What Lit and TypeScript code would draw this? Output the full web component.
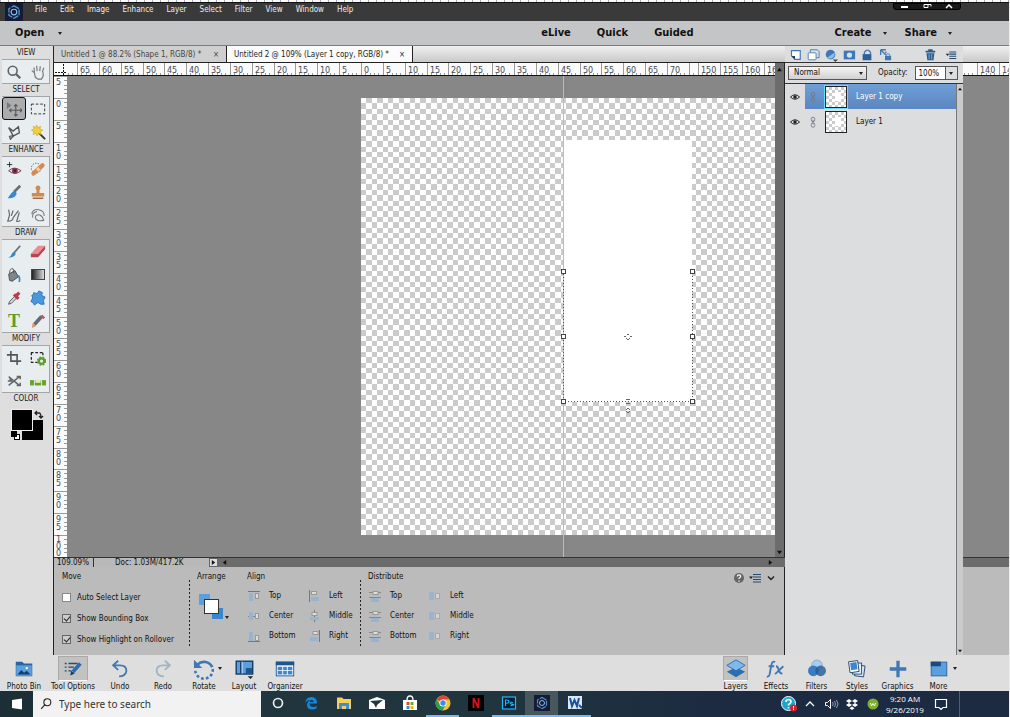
import { LitElement, html, css, svg, TemplateResult } from 'lit';
import { customElement, property } from 'lit/decorators.js';
import { classMap } from 'lit/directives/class-map.js';

const BLUE = '#3f78b5';
const LIGHT = '#8fbbe4';
const GREY = '#606468';

const ICONS: Record<string, TemplateResult> = {
  // tool box
  zoom: svg`<circle cx="7.500" cy="7.500" r="5" fill="none" stroke="${GREY}" stroke-width="1.800"/><path d="M11 11l5 5" stroke="${GREY}" stroke-width="2.600"/>`,
  hand: svg`<path d="M5 10L2 7.500M5 10L4.500 4M8 8L7.500 2M11 8L11.500 2.500M14 9l1.500-5M5 10l1 5 3 2h4l2-4-.5-4" fill="none" stroke="#777" stroke-width="1.300"/>`,
  move: svg`<path d="M1 1v8l5-4z" fill="#777"/><path d="M11 4v13M5 10.500h12M9 6l2-2 2 2M9 15l2 2 2-2M6 8.500l-2 2 2 2M16 8.500l2 2-2 2" fill="none" stroke="#555" stroke-width="1.200"/>`,
  marquee: svg`<rect x="1.500" y="3.500" width="15" height="11" fill="none" stroke="#222" stroke-dasharray="3 2"/>`,
  lasso: svg`<path d="M3 4l5 4 6-5 1 7-6 3-4 4-1-3 4-1z" fill="none" stroke="#555" stroke-width="1.500"/>`,
  wand: svg`<path d="M9 9l8 8" stroke="#333" stroke-width="2"/><path d="M7.500 1l1.500 3 3-1.500-1 3 3.500 1.500-3 1.500 1 3.500-3-1.500-1.500 3-1.500-3-3 1.500 1-3.500-3-1.500 3-1.500-1-3 3 1.500z" fill="#f0cf3c" stroke="#c9a11e" stroke-width=".6"/>`,
  redeye: svg`<path d="M4 1v6M1 4h6" stroke="#222"/><path d="M3 11q6-6 14 0-7 6-14 0z" fill="#e3dada" stroke="#5c3c44"/><circle cx="10" cy="11" r="3.200" fill="#8c2e48"/><circle cx="10" cy="11" r="1.200" fill="#222"/>`,
  heal: svg`<circle cx="7" cy="8" r="5.500" fill="none" stroke="#555" stroke-dasharray="1.500 1.500"/><path d="M4 14L14 5" stroke="#d8894f" stroke-width="5" stroke-linecap="round"/><path d="M8 10.500l2.500-2.200" stroke="#f5cda6" stroke-width="4"/>`,
  smart: svg`<path d="M16 2L9 9" stroke="#6c7074" stroke-width="3"/><path d="M10 8q-2 0-4 2.500T2 16q6 0 8-2t2-4z" fill="#3b86cc"/>`,
  stamp: svg`<path d="M6.500 3q2.500-2.500 5 0 1 2-.8 4v3H16v4H2v-4h5.300V7q-1.800-2-.8-4z" fill="#cd8a52"/><path d="M3 16h12" stroke="#9a5b2c" stroke-width="1.500"/>`,
  blur: svg`<path d="M3 3l1 6-2 7q6 0 6-4l6-8M8 4l-2 6M15 6l-3 10q2 1 4-1" fill="none" stroke="#666" stroke-width="1.300"/>`,
  sponge: svg`<path d="M2 8q1-6 8-5 6 1 6 7M16 15q-9 2-10-3 0-4 5-3 4 2 4 6M3 12q-1-6 5-7" fill="none" stroke="#777" stroke-width="1.200"/>`,
  brush: svg`<path d="M16 2l-7 8" stroke="#6c7074" stroke-width="2"/><path d="M9 9l2 2q-2 5-9 4 4-1 4-3 1-3 3-3z" fill="#3b86cc"/>`,
  eraser: svg`<path d="M1 11l8-9h8l-8 9z" fill="#e88d94"/><path d="M1 11h8v4H1zM9 11l8-9v4l-8 9z" fill="#b4464f"/>`,
  bucket: svg`<path d="M3 8l7-4 4 7-7 5-3-1z" fill="#7f8589" stroke="#44484c"/><path d="M4 7Q4 1 8 2l1 5" fill="none" stroke="#555"/><path d="M14 9q3 1 2 8h-2q1-5-1-7z" fill="#3b86cc"/>`,
  picker: svg`<path d="M3 16l1-3 6-6 2 2-6 6z" fill="#ddd" stroke="#444"/><path d="M9 5l5 5M11 7l4-4" stroke="#b93b4b" stroke-width="3.500"/>`,
  shape: svg`<path d="M4 3l4 1 2-3 4 2-1 3 4 2-2 4 1 4-4 0-3-2-4 3-2-3-2-1 2-4-1-3 2-1z" fill="#4a97dd" stroke="#2e72b5"/>`,
  pencil: svg`<path d="M5 13l8-9" stroke="#666a6e" stroke-width="4"/><path d="M3 11l4 4-5 2z" fill="#d89a68"/><path d="M12 3l2-1 3 3-2 2z" fill="#c3505a"/>`,
  crop: svg`<path d="M5.500 1v11.500H17M1 5.500h11.500V17" fill="none" stroke="#555" stroke-width="1.800"/>`,
  recompose: svg`<path d="M1 3h14M1 14h8M1.500 3v11M14.500 3v4" fill="none" stroke="#222" stroke-width="1.400" stroke-dasharray="3 2"/><circle cx="13" cy="12.500" r="3" fill="none" stroke="#5f9c2d" stroke-width="2.500"/><circle cx="13" cy="12.500" r="4.600" fill="none" stroke="#5f9c2d" stroke-width="1.500" stroke-dasharray="2 1.700"/>`,
  content: svg`<path d="M3 4l12 10M3 14L15 4M2 9h4l-2-3M12 14h4v-3M12 4h4v3" fill="none" stroke="#666" stroke-width="1.700"/>`,
  straighten: svg`<rect x="0" y="8" width="18" height="6" fill="#6aa22d"/><rect x="6" y="7" width="6" height="4" fill="#dff0b6"/><path d="M5 7v8M13 7v8" stroke="#e9eff1"/>`,
  // layer panel
  newlayer: svg`<path d="M4 3h10v10H8L4 9z" fill="#fff" stroke="${BLUE}" stroke-width="1.300"/><path d="M4 9h4v4z" fill="#173c66"/>`,
  newgroup: svg`<path d="M5 5V2h8l2 2v7h-3" fill="none" stroke="${BLUE}"/><rect x="2.500" y="5.500" width="9" height="8" rx="1" fill="#fff" stroke="${BLUE}"/>`,
  adjust: svg`<circle cx="7.500" cy="7.500" r="5.500" fill="${BLUE}"/><path d="M3.500 11A5.500 5.500 0 0 0 12 5z" fill="${LIGHT}"/><path d="M10 13h6l-3 3z" fill="#444"/>`,
  mask: svg`<rect x="2" y="3" width="13" height="10" fill="${BLUE}"/><circle cx="8.500" cy="8" r="3" fill="#cfe3f6"/>`,
  lock: svg`<path d="M5 7V5q3.500-5 7 0v2" fill="none" stroke="${BLUE}" stroke-width="1.500"/><rect x="3" y="7" width="10" height="7" fill="#2d6097"/>`,
  locktrans: svg`<path d="M3 2h6M3 2v6M3 2l6 6M9 4v2" fill="none" stroke="${BLUE}" stroke-width="1.500"/><rect x="8" y="9" width="7" height="5" fill="${BLUE}"/><path d="M9.500 9V7.500q2-2 4 0V9" fill="none" stroke="${BLUE}"/>`,
  trash: svg`<path d="M3 3h11v2H3zM4 6h9l-1 8H5zM6 1.500h5V3H6z" fill="#28598e"/><path d="M7 7v6M10 7v6" stroke="${LIGHT}"/>`,
  panelmenu: svg`<path d="M6 4.500h8M6 7h8M6 9.500h8M6 12h8" stroke="#274a70" stroke-width="1.200"/><path d="M2 6.500h4l-2 2.500z" fill="#222"/>`,
  eye: svg`<path d="M2 8q6-6 12 0-6 6-12 0z" fill="none" stroke="#222" stroke-width="1.300"/><circle cx="8" cy="8" r="2.300" fill="#222"/>`,
  link: svg`<rect x="6" y="2.500" width="4" height="5" rx="2" fill="none" stroke="#778"/><rect x="6" y="9" width="4" height="5" rx="2" fill="none" stroke="#778"/><path d="M8 5.500v5" stroke="#778"/>`,
  help: svg`<circle cx="8" cy="8" r="5" fill="#666"/><path d="M6.300 6.500q0-1.700 1.700-1.700t1.700 1.500q0 1-1.700 2v.7M8 10.500v1.200" fill="none" stroke="#fff" stroke-width="1.200"/>`,
  chevron: svg`<path d="M5 6.500L8 9.500 11 6.500" fill="none" stroke="#222" stroke-width="1.500"/>`,
  // action bar, 24 x 24
  bin: svg`<path d="M3 4h7l2 2h9v14H3z" fill="#2b649f"/><rect x="3.500" y="8" width="17" height="11.500" fill="#5b9fdd"/><path d="M5 18l4-5 3 3 3-2 4 4z" fill="#123f70"/><circle cx="15" cy="11" r="1.300" fill="#fff"/>`,
  options: svg`<path d="M3 6h2M3 10h2M3 14h2M7 6h10M7 10h6M7 14h3" stroke="#274a70" stroke-width="1.500"/><path d="M20 6l-8 9" stroke="#2b6cb0" stroke-width="4"/><path d="M9 19l1-5 4 3z" fill="#173c66"/>`,
  undo: svg`<path d="M10 3L4.500 8l5.500 5M5 8h7q7 0 7 6-1 6-8 6" fill="none" stroke="${BLUE}" stroke-width="2"/>`,
  redo: svg`<path d="M14 3l5.500 5-5.500 5M19 8h-7q-7 0-7 6 1 6 8 6" fill="none" stroke="#9db4c9" stroke-width="2"/>`,
  rotate: svg`<path d="M5 7a10 10 0 0 1 16 3" fill="none" stroke="${BLUE}" stroke-width="3"/><path d="M1 2v9h9z" fill="${BLUE}"/><path d="M21.500 12A9.500 9.500 0 1 1 2.500 14" fill="none" stroke="${BLUE}" stroke-width="2.800" stroke-dasharray="3 2.400"/>`,
  layout: svg`<rect x="3.500" y="3.500" width="18" height="14" fill="#5b9fdd" stroke="#143a63" stroke-width="1.500"/><path d="M8.500 4v13" stroke="#143a63" stroke-width="1.500"/><path d="M14 11h7v6h-7z" fill="#1d5590"/><path d="M10 4v13" stroke="#cfe3f6"/><path d="M16 20h6l-3 3z" fill="#222"/>`,
  organizer: svg`<rect x="2.500" y="4.500" width="19" height="15" fill="#fff" stroke="#1d5590"/><rect x="2" y="4" width="20" height="4" fill="#1d5590"/><path d="M4 9.500h5V13H4zM10 9.500h4V13h-4zM15 9.500h5V13h-5zM4 14h5v4H4zM10 14h4v4h-4zM15 14h5v4h-5z" fill="#3b86cc"/>`,
  layers: svg`<path d="M12 10l10 5-10 6-10-6z" fill="#2d6fae"/><path d="M12 2l10 6-10 6L2 8z" fill="#7db9ee" stroke="#2d6fae"/>`,
  effects: svg`<path d="M11 4.500q-3-2-4 3L5 18q-1 3-3 2M4 9h6M12 9q2 0 3 4t4 4M20 9l-9 8.500" fill="none" stroke="${BLUE}" stroke-width="2"/>`,
  filters: svg`<circle cx="12" cy="8" r="5.800" fill="#a6cdef" stroke="#6fa3d2" stroke-width=".8"/><circle cx="8" cy="14" r="5.800" fill="#3b7cc0"/><circle cx="16" cy="14" r="5.800" fill="#245a93" opacity=".8"/>`,
  styles: svg`<rect x="10" y="8" width="10" height="12" fill="#d7e8f7" stroke="#274a70" transform="rotate(8 15 14)"/><rect x="7" y="5.500" width="10" height="12" fill="#e9f3fb" stroke="#274a70"/><rect x="3.500" y="3.500" width="10" height="12" fill="#fff" stroke="#274a70" transform="rotate(-8 8 9)"/><rect x="5" y="5" width="7" height="8" fill="#3b86cc" transform="rotate(-8 8 9)"/>`,
  graphics: svg`<path d="M12 3v18M3 12h18" stroke="${BLUE}" stroke-width="3.600"/>`,
  more: svg`<rect x="3.500" y="4.500" width="17" height="15" fill="#5b9fdd" stroke="#2b649f"/><path d="M3 4h11v5H3z" fill="#1d4a7d"/>`,
  arrange: svg`<rect x="0" y="0" width="11" height="11" fill="#5b9fdd"/><rect x="13" y="14" width="11" height="11" fill="#3b86cc"/><rect x="5.500" y="5.500" width="14" height="14" fill="#fff" stroke="#333"/>`,
  // task bar, 16 x 16
  windows: svg`<path d="M3 4l10-1.500v11L3 12z" fill="#fff"/>`,
  search: svg`<circle cx="9.500" cy="6" r="4" fill="none" stroke="#222" stroke-width="1.200"/><path d="M6.500 9L2.500 13.500" stroke="#222" stroke-width="1.300"/>`,
  cortana: svg`<circle cx="8" cy="8" r="4.500" fill="none" stroke="#eee" stroke-width="1.700"/>`,
  edge: svg`<path d="M2 8Q3 2 8.500 2 14 2 14 8.500H6.500q0 3.500 4 3.500 2 0 3-1v2.500q-2 1-4.500 1Q4 14.500 4 9.500 4.500 6 8 5 3.500 5 2 8z" fill="#1488de"/><path d="M6.700 7h4q0-2-2-2-1.700 0-2 2z" fill="#20353d"/>`,
  explorer: svg`<path d="M1 2.500h5l1.500 1.500H15V14H1z" fill="#f6cf5c"/><path d="M3 8h10v6h-3v-3H6v3H3z" fill="#3b8fd6"/>`,
  mail: svg`<path d="M0 5l8-3 8 3v9H0z" fill="#fff"/><path d="M1 6l13-1-6 5-1 3-2-4z" fill="#20353d"/>`,
  store: svg`<path d="M1 5h14v10H1z" fill="#fff"/><path d="M5 5q0-4 3-4t3 4" fill="none" stroke="#fff" stroke-width="1.300"/><path d="M4.500 7h3v3h-3z" fill="#e24a25"/><path d="M8.500 7h3v3h-3z" fill="#6fae24"/><path d="M4.500 11h3v3h-3z" fill="#2a93dd"/><path d="M8.500 11h3v3h-3z" fill="#f2b417"/>`,
  chrome: svg`<circle cx="8" cy="8" r="7.500" fill="#f4c430"/><path d="M8 8L1.500 4.300A7.500 7.500 0 0 1 14.500 4.500H8z" fill="#db4437"/><path d="M1.500 4.300A7.500 7.500 0 0 0 7.500 15.500L11 9.500 5 9z" fill="#2d9c58"/><circle cx="8" cy="8" r="3.600" fill="#fff"/><circle cx="8" cy="8" r="2.700" fill="#4285f4"/>`,
  netflix: svg`<rect width="16" height="16" fill="#000"/><path d="M5.500 3v10M10.500 3v10M5.500 3l5 10" stroke="#d8111c" stroke-width="1.800" fill="none"/>`,
  photoshop: svg`<rect x="1.500" y="2" width="13" height="12" fill="#001d33" stroke="#24b5f5" stroke-width="1.200"/><path d="M4.500 11V5h1.500q2 0 2 1.600T6 8.200H4.500M12 7.500q-2.500-.8-2.500.5t2.500 1.400-2.500 1.300" fill="none" stroke="#24b5f5" stroke-width="1.100"/>`,
  elements: svg`<rect width="16" height="16" fill="#161a35"/><path d="M8 2.500l4.500 2.500v6L8 13.500 3.500 11V5z" fill="none" stroke="#4d94cf" stroke-width="1.200" stroke-dasharray="5 1"/><circle cx="8" cy="8" r="2.500" fill="none" stroke="#8ac0ee"/>`,
  word: svg`<path d="M1 1h14v13H1z" fill="#dbe8f8"/><path d="M3 3l2 8 2.500-6L10 11l2-8" fill="none" stroke="#1d4fa0" stroke-width="2"/><path d="M12 10l3 3" stroke="#1d4fa0" stroke-width="2"/>`,
  support: svg`<circle cx="7.500" cy="7.500" r="7" fill="#1ca5cf" stroke="#fff"/><path d="M5 6q0-2.500 2.500-2.500T10 6q0 1-2.500 2.500v1M7.500 11v1.500" fill="none" stroke="#fff" stroke-width="1.600"/><circle cx="12.500" cy="12" r="3.500" fill="#d8202c"/><path d="M12.500 10v2.500M12.500 13v1" stroke="#fff"/>`,
  up: svg`<path d="M4 10l4-4 4 4" fill="none" stroke="#fff" stroke-width="1.300"/>`,
  speaker: svg`<path d="M2.500 6.500h2l3-3v9l-3-3h-2z" fill="none" stroke="#fff"/><path d="M9.500 6q1.500 2 0 4M11.500 5q2 3 0 6M13.500 4q3 4 0 8" fill="none" stroke="#99a" />`,
  dropbox: svg`<path d="M5 3L2 5l3 2 3-2zM11 3L8 5l3 2 3-2zM5 7L2 9l3 2 3-2zM11 7L8 9l3 2 3-2zM8 10.500l-2.500 1.800L8 14l2.500-1.700z" fill="#fff"/>`,
  green: svg`<circle cx="8" cy="8" r="5.500" fill="#7fae30"/><path d="M5.500 7l1 3L8 7.500 9.500 10l1-3" fill="none" stroke="#eef7d8"/>`,
  notice: svg`<path d="M2.500 3.500h11v8H10L8 13.500 6 11.500H2.500z" fill="none" stroke="#fff" stroke-width="1.200"/>`,
  // align and distribute
  atop: svg`<path d="M0 1.500h12" stroke="#777"/><rect x="1" y="3" width="4" height="8" fill="#98b4cf"/><rect x="7.500" y="3.500" width="3" height="5" fill="#ddd" stroke="#999"/>`,
  acenter: svg`<rect x="1" y="2" width="4" height="8" fill="#98b4cf"/><rect x="7.500" y="3.500" width="3" height="5" fill="#ddd" stroke="#999"/><path d="M0 6.500h1M5 6.500h2" stroke="#888"/>`,
  abottom: svg`<path d="M0 11.500h12" stroke="#777"/><rect x="1" y="2" width="4" height="9" fill="#98b4cf"/><rect x="7.500" y="5.500" width="3" height="5" fill="#ddd" stroke="#999"/>`,
  aleft: svg`<path d="M1.500 0v12" stroke="#777"/><rect x="3.500" y="1.500" width="5" height="3" fill="#ddd" stroke="#999"/><rect x="3" y="7" width="8" height="4" fill="#98b4cf"/>`,
  amiddle: svg`<path d="M6.500 0v12" stroke="#777"/><rect x="4" y="2.500" width="5" height="3" fill="#ddd" stroke="#999"/><rect x="2" y="7" width="9" height="3" fill="#98b4cf"/>`,
  aright: svg`<path d="M11.500 0v12" stroke="#777"/><rect x="5" y="1.500" width="5" height="3" fill="#ddd" stroke="#999"/><rect x="2" y="7" width="8" height="4" fill="#98b4cf"/>`,
  dvert: svg`<path d="M0 2.500h12M0 7.500h12" stroke="#888"/><rect x="4" y="1.500" width="5" height="3" fill="#ddd" stroke="#999"/><rect x="2" y="8" width="8" height="4" fill="#98b4cf"/>`,
  dhoriz: svg`<rect x="0" y="2" width="5" height="8" fill="#98b4cf"/><rect x="6.500" y="3.500" width="4" height="5" fill="#d3d3d3" stroke="#aaa"/>`,
};

const icon = (name: string, box = 18, cls = 'i18') =>
  html`<svg class=${cls} viewBox="0 0 ${box} ${box}" aria-hidden="true">${ICONS[name]}</svg>`;

const PITCH = 21.85;

@customElement('ruler-strip')
class RulerStrip extends LitElement {
  @property({ type: Boolean }) vertical = false;
  @property({ attribute: false }) marks: { at: number; label: string }[] = [];

  static styles = css`
    :host { display: block; overflow: hidden; background: #fafafa; }
    svg { display: block; width: 100%; height: 100%; }
    text { font: 8px "DejaVu Sans", Verdana, sans-serif; fill: #444a55; }
    .tick { stroke: #9a9a9a; }
  `;

  private stack(at: number, label: string) {
    const long = label.length > 2;
    const first = at + (long ? 7 : 9);
    const step = long ? 7 : 8;
    return [...label].map((c, i) => svg`<text x="2" y=${first + i * step}>${c}</text>`);
  }

  render() {
    const minor = [1, 2, 3, 4].map((n) => Math.round((n * PITCH) / 5));
    return html`<svg>
      ${this.marks.map(({ at, label }) => this.vertical
        ? svg`<path class="tick" d="M0 ${at + 0.5}h13 ${minor.map((m) => `M10 ${at + m + 0.5}h3`).join('')}"/>${this.stack(at, label)}`
        : svg`<path class="tick" d="M${at + 0.5} 0v12 ${minor.map((m) => `M${at + m + 0.5} 10v3`).join('')}"/>
            <text x=${at + 3} y="10">${label}</text>`)}
    </svg>`;
  }
}

const TOP_MARKS = [
  ...Array.from({ length: 30 }, (_, i) => ({
    at: Math.round(294 + (i - 14) * PITCH),
    label: i < 1 || i > 28 ? '' : String(Math.abs(i - 14) * 5),
  })),
  ...['150', '155', '160', '165'].map((label, i) => ({ at: Math.round(631 + i * PITCH), label })),
];
const SIDE_MARKS = Array.from({ length: 22 }, (_, i) => ({
  at: Math.round(22 + (i - 1) * PITCH),
  label: String(Math.abs(i - 1) * 5),
}));
const TAIL_MARKS = [{ at: -8, label: '' }, { at: 14, label: '140' }, { at: 36, label: '145' }];

// Grey squares of the transparency grid, snapped to whole pixels.
const CELL = 5.4;
const CHECKS = (() => {
  const edge = (n: number) => Math.round(n * CELL);
  let d = '';
  for (let r = 0; r < 81; r++) {
    for (let c = (r + 1) % 2; c < 160; c += 2) {
      d += `M${294 + edge(c)} ${22 + edge(r)}H${294 + edge(c + 1)}V${22 + edge(r + 1)}H${294 + edge(c)}z`;
    }
  }
  return d;
})();

const TOOLS: [string, [string, string][]][] = [
  ['VIEW', [['zoom', 'Zoom'], ['hand', 'Hand']]],
  ['SELECT', [['move', 'Move'], ['marquee', 'Marquee'], ['lasso', 'Lasso'], ['wand', 'Quick selection']]],
  ['ENHANCE', [['redeye', 'Red eye'], ['heal', 'Healing brush'], ['smart', 'Smart brush'], ['stamp', 'Clone stamp'], ['blur', 'Blur'], ['sponge', 'Sponge']]],
  ['DRAW', [['brush', 'Brush'], ['eraser', 'Eraser'], ['bucket', 'Paint bucket'], ['gradient', 'Gradient'], ['picker', 'Color picker'], ['shape', 'Custom shape'], ['type', 'Type'], ['pencil', 'Pencil']]],
  ['MODIFY', [['crop', 'Crop'], ['recompose', 'Recompose'], ['content', 'Content-aware move'], ['straighten', 'Straighten']]],
];

const LEFT_ACTIONS = [['bin', 'Photo Bin'], ['options', 'Tool Options'], ['undo', 'Undo'], ['redo', 'Redo'], ['rotate', 'Rotate'], ['layout', 'Layout'], ['organizer', 'Organizer']];
const RIGHT_ACTIONS = [['layers', 'Layers'], ['effects', 'Effects'], ['filters', 'Filters'], ['styles', 'Styles'], ['graphics', 'Graphics'], ['more', 'More']];

@customElement('app-root')
class AppRoot extends LitElement {
  static styles = css`
    :host {
      display: flex; flex-direction: column; min-height: 100vh; box-sizing: border-box;
      padding-right: 1px; background: #eee; color: #111; overflow: hidden;
      font: 8px/12px "DejaVu Sans Condensed", "DejaVu Sans", Tahoma, sans-serif;
    }
    * { box-sizing: border-box; }
    button, select, input { font: inherit; color: inherit; margin: 0; }
    button { border: 0; padding: 0; background: none; }
    svg { display: block; flex: none; }
    .i12 { width: 12px; height: 12px; } .i16 { width: 16px; height: 16px; }
    .i18 { width: 18px; height: 18px; } .i14 { width: 14px; height: 14px; }
    .i24 { width: 24px; height: 24px; }
    .caret { width: 0; height: 0; border: 2px solid transparent; border-top: 3px solid #222; border-bottom: 0; }

    .edge { height: 3px; border-bottom: 1px solid #111; background: repeating-linear-gradient(90deg, #aab 0 1px, #fbfbfb 1px 8px); }
    .menubar { display: flex; height: 18px; background: #3a3a3a; color: #eee; padding-left: 5px; position: relative; }
    .menubar nav { display: flex; gap: 13px; padding: 0 0 5px 12px; }
    .logo { background: #161a35; }
    .winctl { display: flex; position: absolute; right: 48px; top: 0; width: 68px; height: 7px; background: #181818; border: 1px solid #000; border-radius: 0 0 3px 3px; color: #fff; justify-content: space-around; }
    .winctl svg { width: 10px; height: 5px; }
    .modes { display: flex; align-items: center; height: 25px; background: #c4c5c6; border-bottom: 1px solid #7c7c7c; font-size: 11px; font-weight: bold; line-height: 16px; padding: 0 57px 0 15px; }
    .modes button { display: flex; align-items: center; gap: 14px; }
    .modes .mid { display: flex; gap: 26px; margin-left: auto; padding-left: 338px; }
    .modes .end { display: flex; gap: 18px; margin-left: auto; }
    .modes .end button { gap: 11px; }

    .main { flex: 1; display: flex; min-height: 0; }
    .tools { width: 54px; background: #dedede; border-right: 1px solid #222; padding: 1px 3px 0 2px; display: flex; flex-direction: column; align-items: stretch; }
    h2 { margin: 0; font-size: 8px; line-height: 12px; font-weight: normal; text-align: center; color: #222; }
    .group { display: grid; grid-template-columns: 24px 24px; grid-auto-rows: 23px; background: #e8eef0; border: 0 solid #a5a5a5; border-width: 1px 1px 1px 0; }
    .group button { display: grid; place-items: center; border-radius: 3px; height: 23px; }
    .group svg { width: 16px; height: 16px; }
    .group .on { background: #aaacad; border: 1px solid #111; }
    .grad { width: 14px; height: 11px; background: linear-gradient(90deg, #222, #ddd); border: 1px solid #444; }
    .tee { font: bold 18px/20px "Liberation Serif", serif; color: #5f9c2d; }
    .swatches { width: 34px; height: 34px; margin: 4px 0 0 9px; }

    .doc { flex: 1; min-width: 0; display: flex; flex-direction: column; }
    .tabs { display: flex; height: 17px; background: linear-gradient(#f0f0f0, #c9c9c9); border-bottom: 1px solid #222; line-height: 15px; }
    .tabs button { display: flex; justify-content: space-between; min-width: 173px; padding: 0 7px; border-right: 1px solid #222; background: #cfcfcf; color: #444; white-space: nowrap; align-items: center; }
    .tabs .on { background: #fbfbfb; color: #222; min-width: 186px; }
    .stage { flex: 1; min-height: 0; display: grid; grid-template: 13px 1fr / 13px 1fr 10px; background: #878787; }
    .corner { background: #fafafa; border-bottom: 1px solid #111; }
    .top { border-bottom: 1px solid #111; }
    .vbar { grid-column: 3; grid-row: 1 / 3; background: #6c6c6c; display: flex; flex-direction: column; justify-content: space-between; align-items: center; padding: 4px 0 2px; border-right: 1px solid #222; }
    .vbar svg, .hbar svg { width: 5px; height: 5px; }
    .side { grid-column: 1; grid-row: 2; }
    .canvas { width: 100%; height: 100%; grid-column: 2; grid-row: 2; min-height: 0; }
    .status { display: flex; height: 10px; border-top: 1px solid #333; background: #b9b9b9; line-height: 9px; }
    .status .pct { width: 40px; padding-left: 3px; border-right: 1px solid #333; }
    .status .size { width: 115px; padding-left: 21px; }
    .status button { width: 9px; background: #ddd; border: 1px solid #666; display: grid; place-items: center; }
    .status button svg { width: 5px; height: 5px; }
    .hbar { flex: 1; background: #6c6c6c; display: flex; justify-content: space-between; align-items: center; padding: 0 12px 0 4px; }

    .options { display: flex; height: 88px; background: #bbb; padding: 3px 5px 0 8px; border-right: 1px solid #222; }
    .options h3 { margin: 0; font-size: 8px; font-weight: normal; line-height: 14px; }
    .move { width: 127px; display: flex; flex-direction: column; }
    .move h3 { margin-bottom: 3px; }
    .move label { display: flex; align-items: center; gap: 6px; height: 21px; white-space: nowrap; }
    .move input { appearance: none; width: 9px; height: 9px; background: #fff; border: 1px solid #888; }
    .move input:checked { background: #ccc; border-color: #666; }
    .move input:checked::before { content: ""; display: block; width: 3px; height: 5px; margin: 0 0 0 2px; border: solid #222; border-width: 0 1px 1px 0; transform: rotate(40deg); }
    .rule { width: 1px; background: repeating-linear-gradient(#222 0 2px, transparent 2px 4px); margin: 10px 0 8px; }
    .arrange { width: 57px; padding-left: 7px; }
    .arrange button { display: flex; align-items: flex-end; gap: 2px; margin: 10px 0 0 2px; }
    .arrange svg { width: 24px; height: 25px; }
    .cluster { width: 113px; }
    .cluster.second { padding-left: 7px; width: 130px; }
    .cluster .grid { display: grid; grid-template-columns: 60px 54px; grid-auto-rows: 20px; margin-top: 2px; }
    .cluster .grid button { display: flex; align-items: center; gap: 9px; padding-left: 1px; }
    .corners { margin-left: auto; display: flex; height: 14px; }

    .panel { width: 178px; background: #dcdddf; display: flex; flex-direction: column; }
    .icons { display: flex; height: 17px; padding: 1px 2px 0 3px; gap: 4px; border-bottom: 1px solid #333; }
    .icons button { width: 14px; }
    .icons .push { margin-left: 27px; }
    .icons .push + button { margin-left: 3px; }
    .blend { display: flex; align-items: center; height: 21px; border-bottom: 1px solid #333; padding: 0 5px 0 3px; }
    .blend select { appearance: none; width: 79px; height: 14px; border: 1px solid #555; background: linear-gradient(#f5f5f5, #d0d0d0); padding: 0 5px; border-radius: 0; }
    .pick { position: relative; display: flex; align-items: center; }
    .pick .caret { position: absolute; right: 4px; }
    .blend label { margin-left: 11px; margin-right: 7px; }
    .blend input { width: 31px; height: 14px; border: 1px solid #555; background: #fff; padding: 0 3px; border-radius: 0; }
    .blend .drop { width: 12px; height: 14px; border: 1px solid #555; border-left: 0; display: grid; place-items: center; }
    .list { flex: 1; display: flex; }
    .rows { flex: 1; border-right: 1px solid #777; }
    .row { display: flex; height: 25px; align-items: stretch; }
    .row > button { width: 20px; display: grid; place-items: center; }
    .row .body { flex: 1; display: flex; align-items: center; }
    .row .body svg { margin: 0 5px 0 1px; }
    .row.on .body { background: linear-gradient(#6f9fd8, #5b86bf); color: #fff; }
    .thumb { width: 22px; height: 22px; border: 1px solid #222; margin-right: 9px; background: linear-gradient(#fff, #fff) 9px 5px / 6px 9px no-repeat, repeating-conic-gradient(#ccc 0 25%, #fff 0 50%) 0 0 / 6px 6px; }
    .on .thumb { outline: 1px solid #5fe0ff; }
    .gutter { width: 6px; background: #cbcbcb; display: flex; flex-direction: column; justify-content: space-between; align-items: center; padding: 3px 0 2px; }
    .gutter svg { width: 4px; height: 4px; }

    .tail { width: 46px; display: flex; flex-direction: column; }
    .tail .a { height: 17px; background: linear-gradient(#f0f0f0, #c9c9c9); border-bottom: 1px solid #222; }
    .tail ruler-strip { height: 13px; }
    .tail .b { flex: 1; background: #878787; }
    .tail .c { height: 10px; background: #6c6c6c; border-top: 1px solid #333; }
    .tail .d { height: 88px; background: #bbb; }

    .actions { display: flex; justify-content: space-between; height: 36px; background: #dedede; padding-right: 50px; }
    .actions .l { display: grid; grid-template-columns: 48px 50px 44px 42px 40px 40px 42px; }
    .actions .r { display: grid; grid-template-columns: 41px 40px 41px 40px 41px 41px; }
    .actions button { display: flex; flex-direction: column; align-items: center; white-space: nowrap; position: relative; padding-top: 1px; }
    .plate { display: grid; place-items: center; width: 30px; height: 25px; }
    .actions .plate svg { width: 22px; height: 22px; }
    .r .plate { width: 25px; }
    .on .plate { background: #c2c2c0; border: 1px solid #aaa; border-bottom-color: #fff; }
    .actions .caret { position: absolute; right: 2px; top: 12px; }

    .taskbar { display: flex; height: 26px; background: linear-gradient(90deg, #20353d 50%, #1c2a42 72%); color: #fff; }
    .start { width: 33px; display: grid; place-items: center; background: #1d2f36; }
    .find { width: 228px; background: #f2f2f2; display: flex; align-items: center; gap: 6px; padding-left: 6px; }
    .find input { flex: 1; min-width: 0; border: 0; background: none; font: 10px/14px "Noto Sans", "Open Sans", sans-serif; padding: 0; }
    .find input::placeholder { color: #333; opacity: 1; }
    .apps { display: flex; }
    .apps button { width: 33px; display: grid; place-items: center; border-bottom: 2px solid transparent; }
    .apps .run { border-bottom-color: #76b9ed; }
    .apps .cur { background: #46575e; }
    .tray { margin-left: auto; display: flex; align-items: center; padding-right: 10px; gap: 5px; border-right: 1px solid #51606c; margin-right: 49px; }
    .clock { font: 8px/11px "Open Sans", "Noto Sans", sans-serif; text-align: center; width: 38px; margin-right: 4px; white-space: nowrap; }
  `;

  private toolFace(name: string) {
    if (name === 'gradient') return html`<span class="grad"></span>`;
    if (name === 'type') return html`<span class="tee">T</span>`;
    return icon(name);
  }

  private arrow(d: string) {
    return html`<svg viewBox="0 0 6 6" aria-hidden="true"><path d=${d} fill="#111"/></svg>`;
  }

  private canvas() {
    const handles = [[496, 195], [625, 195], [496, 260], [625, 260], [496, 325], [625, 325]];
    return html`<svg class="canvas" role="img" aria-label="Canvas">
      <rect x="294" y="22" width="100%" height="437" fill="#fff"/>
      <path d=${CHECKS} fill="#cbcbcb" shape-rendering="crispEdges"/>
      <rect x="497" y="64" width="128" height="262" fill="#fff"/>
      <rect x="496" y="0" width="1" height="100%" fill="#4deaf2"/>
      <path d="M496.500 195V325.500H625.500V195" fill="none" stroke="#555" stroke-dasharray="1 2"/>
      ${handles.map(([x, y]) => svg`<rect x=${x - 1.5} y=${y - 1.5} width="4" height="4" fill="#fff" stroke="#444"/>`)}
      <path d="M557 260.500h2m4 0h2M559 262l2 2 2-2M560 258.500h2M559 323.500h4M559 327.500h4M559 334l2-2 2 2M559 335l2 2 2-2" fill="none" stroke="#666"/>
    </svg>`;
  }

  private actionButton([name, label]: string[], on: boolean, caret: boolean) {
    return html`<button class=${classMap({ on })}><span class="plate">${icon(name, 24, 'i24')}</span>${label}${caret ? html`<i class="caret"></i>` : ''}</button>`;
  }

  render() {
    const align = [['atop', 'Top'], ['aleft', 'Left'], ['acenter', 'Center'], ['amiddle', 'Middle'], ['abottom', 'Bottom'], ['aright', 'Right']];
    const dist = [['dvert', 'Top'], ['dhoriz', 'Left'], ['dvert', 'Center'], ['dhoriz', 'Middle'], ['dvert', 'Bottom'], ['dhoriz', 'Right']];
    const apps = ['cortana', 'edge', 'explorer', 'mail', 'store', 'chrome', 'netflix', 'photoshop', 'elements', 'word'];
    return html`
      <div class="edge"></div>
      <header class="menubar">
        <svg class="i18 logo" viewBox="0 0 16 16" aria-hidden="true">${ICONS.elements}</svg>
        <nav>${['File', 'Edit', 'Image', 'Enhance', 'Layer', 'Select', 'Filter', 'View', 'Window', 'Help'].map((m) => html`<button>${m}</button>`)}</nav>
        <div class="winctl">
          <svg viewBox="0 0 10 5"><path d="M1 2h7v2H1z" fill="#fff"/></svg>
          <svg viewBox="0 0 10 5"><path d="M2 .5h4v3H2zM6 .5h3v2" fill="none" stroke="#fff"/></svg>
          <svg viewBox="0 0 10 5"><path d="M2 4l3-3 3 3" fill="none" stroke="#fff" stroke-width="1.500"/></svg>
        </div>
      </header>
      <div class="modes">
        <button>Open<i class="caret"></i></button>
        <div class="mid"><button>eLive</button><button>Quick</button><button>Guided</button></div>
        <div class="end"><button>Create<i class="caret"></i></button><button>Share<i class="caret"></i></button></div>
      </div>
      <div class="main">
        <aside class="tools">
          ${TOOLS.map(([title, items]) => html`<h2>${title}</h2><div class="group">
            ${items.map(([n, l]) => html`<button aria-label=${l} class=${classMap({ on: n === 'move' })}>${this.toolFace(n)}</button>`)}
          </div>`)}
          <h2>COLOR</h2>
          <svg class="swatches" viewBox="0 0 34 34" aria-hidden="true">
            <rect x="11" y="11" width="21" height="20" fill="#000"/><rect x=".5" y=".5" width="21" height="21" fill="#000" stroke="#eee"/>
            <path d="M24 4h4q2 0 2 5M26 2l-2 2 2 2M28 7l2 2 2-2" fill="none" stroke="#222" stroke-width="1.300"/>
            <rect x="3.500" y="25.500" width="5" height="5" fill="#fff" stroke="#000"/><rect x="0" y="22" width="6" height="6" fill="#000"/>
          </svg>
        </aside>
        <section class="doc">
          <div class="tabs">
            <button>Untitled 1 @ 88.2% (Shape 1, RGB/8) *<span>×</span></button>
            <button class="on">Untitled 2 @ 109% (Layer 1 copy, RGB/8) *<span>×</span></button>
          </div>
          <div class="stage">
            <svg class="corner" width="13" height="13"><path d="M1 9.500h12M9.500 1v12" stroke="#111" stroke-dasharray="2 1"/></svg>
            <ruler-strip class="top" .marks=${TOP_MARKS}></ruler-strip>
            <ruler-strip class="side" vertical .marks=${SIDE_MARKS}></ruler-strip>
            ${this.canvas()}
            <div class="vbar">${this.arrow('M0 5L3 1 6 5z')}${this.arrow('M0 1L3 5 6 1z')}</div>
          </div>
          <div class="status">
            <span class="pct">109.09%</span><span class="size">Doc: 1.03M/417.2K</span><button aria-label="Status menu">${this.arrow('M1 0L5 3 1 6z')}</button>
            <div class="hbar">${this.arrow('M5 0L1 3 5 6z')}${this.arrow('M1 0L5 3 1 6z')}</div>
          </div>
          <div class="options">
            <div class="move"><h3>Move</h3>
              ${[['Auto Select Layer', false], ['Show Bounding Box', true], ['Show Highlight on Rollover', true]].map(([l, c]) => html`<label><input type="checkbox" .checked=${c as boolean}>${l}</label>`)}
            </div>
            <div class="rule"></div>
            <div class="arrange"><h3>Arrange</h3>
              <button aria-label="Arrange"><svg viewBox="0 0 24 25">${ICONS.arrange}</svg><i class="caret"></i></button>
            </div>
            <div class="cluster"><h3>Align</h3><div class="grid">${align.map(([n, l]) => html`<button>${icon(n, 12, 'i12')}${l}</button>`)}</div></div>
            <div class="rule"></div>
            <div class="cluster second"><h3>Distribute</h3><div class="grid">${dist.map(([n, l]) => html`<button>${icon(n, 12, 'i12')}${l}</button>`)}</div></div>
            <div class="corners">${['help', 'panelmenu', 'chevron'].map((n) => html`<button aria-label=${n}>${icon(n, 16, 'i16')}</button>`)}</div>
          </div>
        </section>
        <aside class="panel">
          <div class="icons">
            ${['newlayer', 'newgroup', 'adjust', 'mask', 'lock', 'locktrans', 'trash', 'panelmenu'].map((n) => html`<button aria-label=${n} class=${classMap({ push: n === 'trash' })}>${icon(n, 16, 'i14')}</button>`)}
          </div>
          <div class="blend">
            <span class="pick"><select aria-label="Blend mode"><option>Normal</option></select><i class="caret"></i></span>
            <label for="opacity">Opacity:</label><input id="opacity" value="100%"><button class="drop" aria-label="Opacity slider"><i class="caret"></i></button>
          </div>
          <div class="list">
            <div class="rows">
              ${['Layer 1 copy', 'Layer 1'].map((l, i) => html`<div class="row ${classMap({ on: i === 0 })}">
                <button aria-label="Toggle visibility">${icon('eye', 16, 'i12')}</button>
                <div class="body">${icon('link', 16, 'i14')}<span class="thumb"></span>${l}</div>
              </div>`)}
            </div>
            <div class="gutter">${this.arrow('M0 5L3 1 6 5z')}${this.arrow('M0 1L3 5 6 1z')}</div>
          </div>
        </aside>
        <div class="tail"><div class="a"></div><ruler-strip class="top" .marks=${TAIL_MARKS}></ruler-strip><div class="b"></div><div class="c"></div><div class="d"></div></div>
      </div>
      <div class="actions">
        <div class="l">${LEFT_ACTIONS.map((a) => this.actionButton(a, a[0] === 'options', a[0] === 'rotate'))}</div>
        <div class="r">${RIGHT_ACTIONS.map((a) => this.actionButton(a, a[0] === 'layers', a[0] === 'more'))}</div>
      </div>
      <footer class="taskbar">
        <button class="start" aria-label="Start">${icon('windows', 16, 'i16')}</button>
        <label class="find">${icon('search', 16, 'i14')}<input placeholder="Type here to search" aria-label="Search"></label>
        <div class="apps">${apps.map((a, i) => html`<button aria-label=${a} class=${classMap({ run: i === 5 || i > 6, cur: a === 'elements' })}>${icon(a, 16, 'i16')}</button>`)}</div>
        <div class="tray">
          ${['support', 'up', 'speaker', 'dropbox', 'green'].map((n) => icon(n, 16, 'i16'))}
          <div class="clock">9:20 AM<br>9/26/2019</div>
          ${icon('notice', 16, 'i16')}
        </div>
      </footer>`;
  }
}
